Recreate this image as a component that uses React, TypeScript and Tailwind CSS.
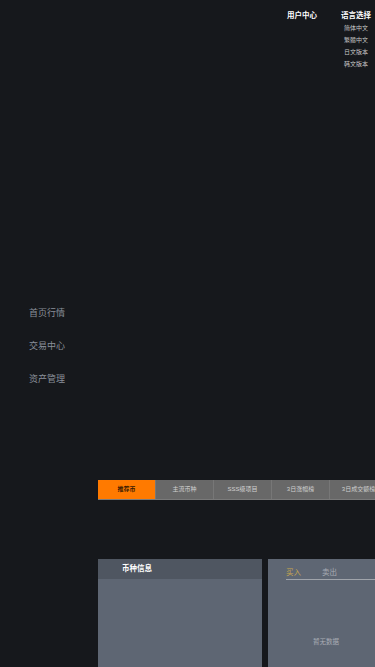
const navItems = ["首页行情", "交易中心", "资产管理"];
const tabs = ["推荐币", "主流币种", "SSS级项目", "3日涨幅榜", "3日成交额榜"];
const langs = ["简体中文", "繁體中文", "日文版本", "韩文版本"];

const font = "font-['Liberation_Sans','Noto_Sans_CJK_SC',sans-serif]";

export default function App() {
  return (
    <div className={`w-[375px] h-[667px] overflow-hidden bg-[#16181c] flex ${font}`}>
      {/* sidebar */}
      <div className="w-[98px] shrink-0 flex flex-col pt-[307px] pl-[29px] gap-[21px]">
        {navItems.map((n) => (
          <div key={n} className="text-[9px] leading-[12px] text-[#8a909a]">{n}</div>
        ))}
      </div>

      {/* main */}
      <div className="flex-1 min-w-0 flex flex-col">
        <div className="h-[480px] relative">
          <div className="absolute top-[10px] left-[189px] text-[7.5px] leading-[12px] font-bold text-white whitespace-nowrap">用户中心</div>
          <div className="absolute top-[10px] left-[240px] flex flex-col items-center w-[36px]">
            <div className="text-[7.5px] leading-[12px] font-bold text-white whitespace-nowrap">语言选择</div>
            <div className="flex flex-col items-center">
              {langs.map((l) => (
                <div key={l} className="text-[6px] leading-[12px] text-[#c8c8c8] whitespace-nowrap">{l}</div>
              ))}
            </div>
          </div>
        </div>

        {/* tab bar */}
        <div className="flex h-[20px] w-[290px] border-b border-[#7a7a7a]">
          {tabs.map((t, i) => (
            <div
              key={t}
              className={
                i === 0
                  ? "w-[57px] shrink-0 bg-[#ff7a00] flex items-center justify-center text-[6px] text-[#3a1a00] font-bold"
                  : "w-[58px] shrink-0 bg-[#686868] border-l border-[#777] flex items-center justify-center text-[6px] text-[#d0d0d0] whitespace-nowrap"
              }
            >
              {t}
            </div>
          ))}
        </div>

        {/* cards */}
        <div className="flex gap-[6px] mt-[59px] flex-1">
          <div className="w-[164px] shrink-0 bg-[#5e6673] flex flex-col">
            <div className="h-[20px] bg-[#4f5661] flex items-center pl-[24px] text-[7.5px] font-bold text-white">币种信息</div>
          </div>
          <div className="w-[164px] shrink-0 bg-[#5e6673] flex flex-col pl-[18px]">
            <div className="flex gap-[21px] pt-[9px] pb-[1px] border-b border-[#a0a4ab] text-[7.5px] leading-[10px]">
              <span className="text-[#c9a64e]">买入</span>
              <span className="text-[#a8acb3]">卖出</span>
            </div>
            <div className="mt-[57px] pl-[27px] text-[6.5px] leading-[10px] text-[#a8acb3]">暂无数据</div>
          </div>
        </div>
      </div>
    </div>
  );
}
